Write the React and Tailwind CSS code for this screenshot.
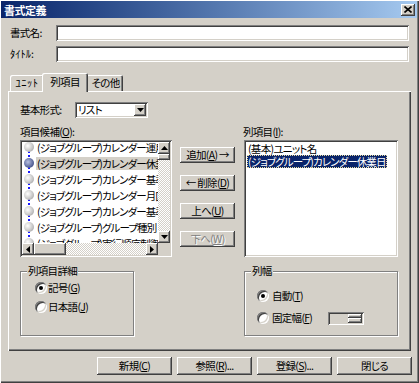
import React from "react";

const RAISED =
  "bg-[#d4d0c8] shadow-[inset_-1px_-1px_#404040,inset_1px_1px_#ffffff,inset_-2px_-2px_#808080,inset_2px_2px_#d4d0c8]";
const SUNKEN =
  "shadow-[inset_1px_1px_#808080,inset_-1px_-1px_#ffffff,inset_2px_2px_#404040,inset_-2px_-2px_#d4d0c8]";

function Tri({ dir, color = "#000000" }) {
  if (dir === "up")
    return (
      <svg width="7" height="4" viewBox="0 0 7 4">
        <path d="M3.5 0L7 4H0Z" fill={color} />
      </svg>
    );
  if (dir === "down")
    return (
      <svg width="7" height="4" viewBox="0 0 7 4">
        <path d="M0 0H7L3.5 4Z" fill={color} />
      </svg>
    );
  if (dir === "left")
    return (
      <svg width="4" height="7" viewBox="0 0 4 7">
        <path d="M4 0V7L0 3.5Z" fill={color} />
      </svg>
    );
  return (
    <svg width="4" height="7" viewBox="0 0 4 7">
      <path d="M0 0L4 3.5L0 7Z" fill={color} />
    </svg>
  );
}

function Btn({ className, children, disabled }) {
  return (
    <div
      className={`flex items-center justify-center whitespace-nowrap ${RAISED} ${className} ${
        disabled ? "text-[#808080] [text-shadow:1px_1px_#ffffff]" : ""
      }`}
    >
      {children}
    </div>
  );
}

function Radio({ checked }) {
  return (
    <span className="flex h-[12px] w-[12px] flex-none items-center justify-center rounded-full bg-white shadow-[inset_1px_1px_#808080,inset_-1px_-1px_#ffffff,inset_2px_2px_#404040,inset_-2px_-2px_#d4d0c8]">
      {checked && <span className="h-[4px] w-[4px] rounded-full bg-black" />}
    </span>
  );
}

const leftItems = [
  "(ジョブグループ)カレンダー運用",
  "(ジョブグループ)カレンダー休業日",
  "(ジョブグループ)カレンダー基準",
  "(ジョブグループ)カレンダー月区分",
  "(ジョブグループ)カレンダー基準日",
  "(ジョブグループ)グループ種別",
  "(ジョブグループ)実行順序制御",
];

function TreeRow({ text, selected }) {
  return (
    <div className="flex h-[16px] items-center whitespace-nowrap">
      <div className="relative h-full w-[14px] flex-none">
        <div className="absolute left-[6px] top-0 h-full w-[2px] bg-[repeating-linear-gradient(to_bottom,#1a1aff_0_2px,transparent_2px_4px)]" />
        <div
          className={`absolute left-[2px] top-[3px] h-[10px] w-[10px] rounded-full ${
            selected
              ? "bg-[radial-gradient(circle_at_40%_40%,#b8c0e0,#4a5890_70%,#2a3060)]"
              : "bg-[radial-gradient(circle_at_38%_38%,#ffffff,#c8c8c8_55%,#909090)]"
          }`}
        />
      </div>
      <span
        className={`h-[13px] px-[1px] leading-[13px] tracking-[-0.9px] ${
          selected ? "bg-[#d4d0c8]" : ""
        }`}
      >
        {text}
      </span>
    </div>
  );
}

function Track({ className }) {
  return (
    <div
      className={`bg-[repeating-conic-gradient(#d4d0c8_0_25%,#ffffff_0_50%)] bg-[length:2px_2px] ${className}`}
    />
  );
}

export default function App() {
  return (
    <div className="flex h-[383px] w-[419px] flex-col overflow-hidden bg-[#d4d0c8] pb-[2px] pl-[1px] pr-[2px] pt-[1px] font-['Noto_Sans_CJK_JP',sans-serif] text-[10.5px] leading-[12px] tracking-[-0.7px] text-black [font-feature-settings:'palt'] shadow-[inset_1px_1px_#ffffff,inset_-1px_-1px_#404040,inset_-2px_-2px_#808080]">
      {/* Title bar */}
      <div className="flex h-[17px] flex-none items-center justify-between bg-linear-to-r from-[#0a246a] to-[#a6caf0] pl-[3px] pr-[2px]">
        <span className="text-[11px] font-bold tracking-[-0.5px] text-white">書式定義</span>
        <div className={`flex h-[12px] w-[14px] items-center justify-center ${RAISED}`}>
          <svg width="8" height="7" viewBox="0 0 8 7">
            <path d="M0.5 0.5L7.5 6.5M7.5 0.5L0.5 6.5" stroke="#000" strokeWidth="1.6" />
          </svg>
        </div>
      </div>

      {/* Name / title fields */}
      <div className="mt-[7px] flex flex-col gap-[5px] pl-[9px]">
        <div className="flex items-center">
          <span className="w-[46px]">書式名:</span>
          <div className={`h-[16px] w-[353px] bg-white ${SUNKEN}`} />
        </div>
        <div className="flex items-center">
          <span className="w-[46px] tracking-[0px]">ﾀｲﾄﾙ:</span>
          <div className={`h-[16px] w-[353px] bg-white ${SUNKEN}`} />
        </div>
      </div>

      {/* Tabs */}
      <div className="relative z-10 ml-[9px] mt-[11px] flex items-end">
        <div className="flex h-[16px] w-[34px] items-center justify-center rounded-t-[2px] tracking-[0.5px] shadow-[inset_1px_1px_#ffffff,inset_-1px_0_#404040,inset_-2px_0_#808080]">
          ﾕﾆｯﾄ
        </div>
        <div className="relative z-10 -mx-[2px] -mb-[1px] flex h-[19px] w-[46px] items-center justify-center rounded-t-[2px] bg-[#d4d0c8] pb-[2px] shadow-[inset_1px_1px_#ffffff,inset_-1px_0_#404040,inset_-2px_0_#808080]">
          列項目
        </div>
        <div className="flex h-[16px] w-[37px] items-center justify-center rounded-t-[2px] pl-[2px] shadow-[inset_1px_1px_#ffffff,inset_-1px_0_#404040,inset_-2px_0_#808080]">
          その他
        </div>
      </div>

      {/* Tab panel */}
      <div className="ml-[7px] h-[260px] w-[403px] flex-none pl-[12px] pt-[11px] shadow-[inset_1px_1px_#ffffff,inset_-1px_-1px_#404040,inset_-2px_-2px_#808080]">
        <div className="flex h-[16px] items-center">
          <span className="w-[55px]">基本形式:</span>
          <div className={`flex h-[16px] w-[73px] items-center bg-white p-[2px] ${SUNKEN}`}>
            <span className="flex-1 pl-[1px]">リスト</span>
            <div className={`flex h-[12px] w-[12px] items-center justify-center ${RAISED}`}>
              <Tri dir="down" />
            </div>
          </div>
        </div>

        <div className="mt-[8px] flex">
          {/* Left list */}
          <div className="w-[152px]">
            <div className="h-[12px]">
              項目候補(<u>O</u>):
            </div>
            <div
              className={`mt-[2px] grid h-[117px] grid-cols-[1fr_12px] grid-rows-[1fr_12px] bg-white p-[2px] ${SUNKEN}`}
            >
              <div className="overflow-hidden">
                <div className="-mt-[3px]">
                  {leftItems.map((t, i) => (
                    <TreeRow key={i} text={t} selected={i === 1} />
                  ))}
                </div>
              </div>
              <div className="flex flex-col">
                <div className={`flex h-[12px] flex-none items-center justify-center ${RAISED}`}>
                  <Tri dir="up" />
                </div>
                <div className={`h-[6px] flex-none ${RAISED}`} />
                <Track className="flex-1" />
                <div className={`flex h-[12px] flex-none items-center justify-center ${RAISED}`}>
                  <Tri dir="down" />
                </div>
              </div>
              <div className="flex">
                <div className={`flex w-[12px] flex-none items-center justify-center ${RAISED}`}>
                  <Tri dir="left" />
                </div>
                <div className={`w-[32px] flex-none ${RAISED}`} />
                <Track className="flex-1" />
                <div className={`flex w-[12px] flex-none items-center justify-center ${RAISED}`}>
                  <Tri dir="right" />
                </div>
              </div>
              <div className="bg-[#d4d0c8]" />
            </div>
          </div>

          {/* Middle buttons */}
          <div className="ml-[8px] flex w-[55px] flex-col gap-[12px] pt-[21px]">
            <Btn className="h-[16px]">
              追加(<u>A</u>)&nbsp;→
            </Btn>
            <Btn className="h-[16px]">
              ←&nbsp;削除(<u>D</u>)
            </Btn>
            <Btn className="h-[16px]">
              上へ(<u>U</u>)
            </Btn>
            <Btn className="h-[16px]" disabled>
              下へ(<u>W</u>)
            </Btn>
          </div>

          {/* Right list */}
          <div className="ml-[9px] w-[154px]">
            <div className="-ml-[1px] h-[12px]">
              列項目(<u>I</u>):
            </div>
            <div className={`mt-[2px] h-[117px] overflow-hidden bg-white p-[2px] ${SUNKEN}`}>
              <div className="whitespace-nowrap pl-[1px]">
                <div className="h-[13px] px-[1px] pt-[1px] leading-[12px]">(基本)ユニット名</div>
                <div className="flex h-[13px]">
                  <span className="h-[13px] border border-dotted border-[#e8dca0] bg-[#0a246a] leading-[11px] tracking-[-0.9px] text-white">
                    (ジョブグループ)カレンダー休業日
                  </span>
                </div>
              </div>
            </div>
          </div>
        </div>

        {/* Group boxes */}
        <div className="mt-[14px] flex">
          <div className="relative h-[65px] w-[114px] border border-[#808080] shadow-[inset_1px_1px_#ffffff,1px_1px_#ffffff]">
            <span className="absolute -top-[7px] left-[6px] bg-[#d4d0c8] px-[1px]">列項目詳細</span>
            <div className="flex flex-col gap-[7px] pl-[14px] pt-[10px]">
              <div className="flex h-[12px] items-center gap-[1px]">
                <Radio checked />
                <span>
                  記号(<u>G</u>)
                </span>
              </div>
              <div className="flex h-[12px] items-center gap-[1px]">
                <Radio />
                <span>
                  日本語(<u>J</u>)
                </span>
              </div>
            </div>
          </div>

          <div className="relative ml-[110px] h-[65px] w-[154px] border border-[#808080] shadow-[inset_1px_1px_#ffffff,1px_1px_#ffffff]">
            <span className="absolute -top-[7px] left-[6px] bg-[#d4d0c8] px-[1px]">列幅</span>
            <div className="flex flex-col gap-[10px] pl-[12px] pt-[18px]">
              <div className="flex h-[12px] items-center gap-[3px]">
                <Radio checked />
                <span>
                  自動(<u>T</u>)
                </span>
              </div>
              <div className="flex h-[12px] items-center gap-[3px]">
                <Radio />
                <span className="w-[53px]">
                  固定幅(<u>F</u>)
                </span>
                <div className={`flex h-[13px] w-[36px] justify-end bg-[#d4d0c8] p-[2px] ${SUNKEN}`}>
                  <div className="flex w-[14px] flex-col">
                    <div className={`flex-1 ${RAISED}`} />
                    <div className={`flex-1 ${RAISED}`} />
                  </div>
                </div>
              </div>
            </div>
          </div>
        </div>
      </div>

      {/* Bottom buttons */}
      <div className="mr-[5px] mt-[6px] flex justify-end gap-[5px]">
        <Btn className="h-[18px] w-[75px]">
          新規(<u>C</u>)
        </Btn>
        <Btn className="h-[18px] w-[75px]">
          参照(<u>R</u>)...
        </Btn>
        <Btn className="h-[18px] w-[75px]">
          登録(<u>S</u>)...
        </Btn>
        <Btn className="h-[18px] w-[75px]">閉じる</Btn>
      </div>
    </div>
  );
}
